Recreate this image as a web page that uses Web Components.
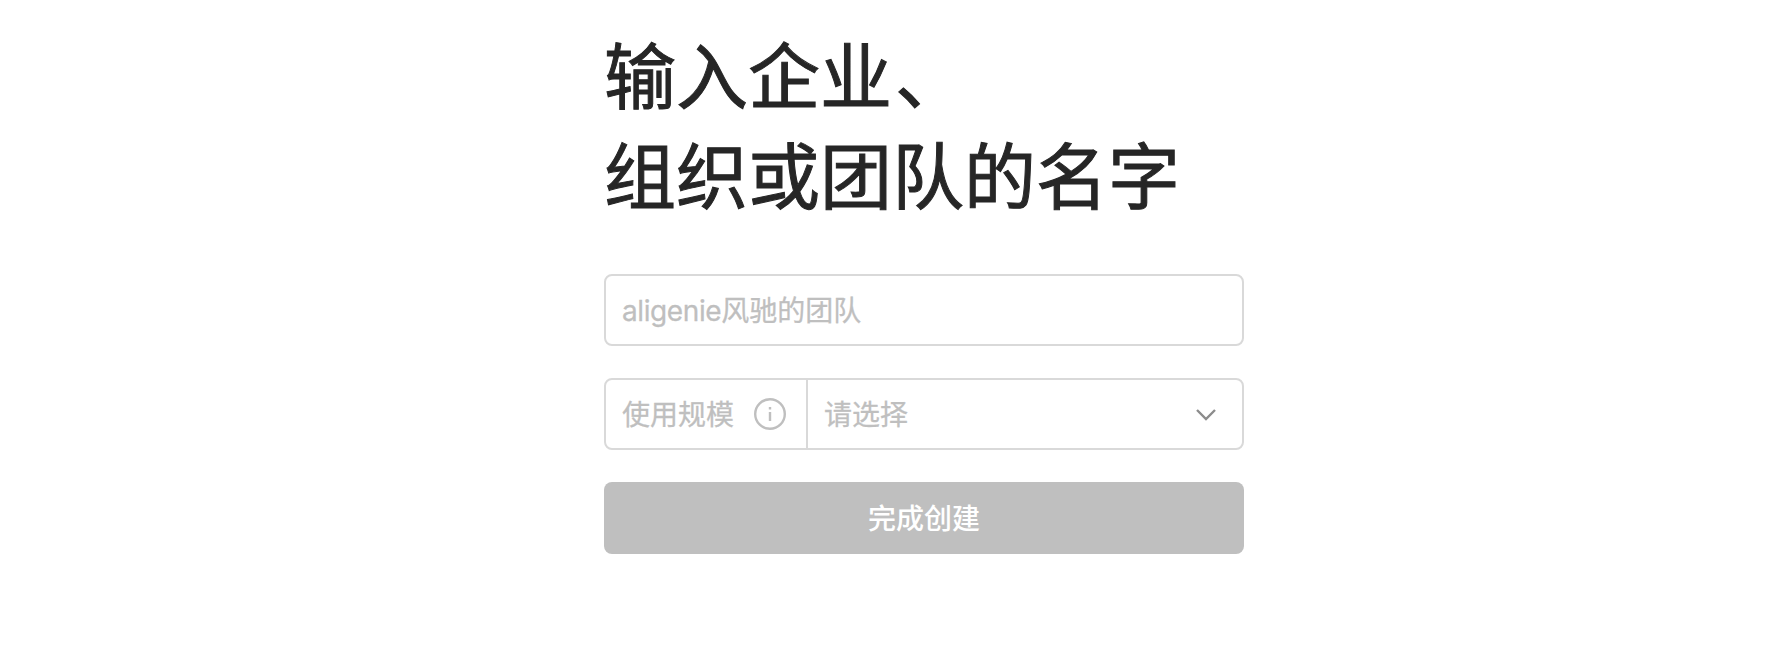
<!DOCTYPE html>
<html lang="zh-CN">
<head>
<meta charset="utf-8">
<title>创建团队</title>
<style>
  html, body { margin: 0; background: #fff; }
  body { font-family: Inter, "Noto Sans CJK SC", sans-serif; overflow: hidden; }
</style>
</head>
<body>
<team-form>
  <form-title>输入企业<span style="margin-left:3px">、</span><br>组织或团队的名字</form-title>
  <text-field placeholder="aligenie风驰的团队"></text-field>
  <select-field label="使用规模" placeholder="请选择"></select-field>
  <submit-button>完成创建</submit-button>
</team-form>
<script>
class TeamForm extends HTMLElement {
  constructor() {
    super();
    this.attachShadow({ mode: 'open' });
    this.shadowRoot.innerHTML = `
      <style>
        :host {
          display: flex;
          flex-direction: column;
          width: 640px;
          margin-left: 604px;
          padding-top: 27px;
        }
      </style>
      <slot></slot>`;
  }
}

class FormTitle extends HTMLElement {
  constructor() {
    super();
    this.attachShadow({ mode: 'open' });
    this.shadowRoot.innerHTML = `
      <style>
        :host {
          display: block;
          margin: 0 0 47px;
          font-size: 72px;
          line-height: 100px;
          font-weight: 400;
          -webkit-text-stroke: 1px #262626;
          color: #262626;
          white-space: nowrap;
        }
      </style>
      <slot></slot>`;
  }
}

class TextField extends HTMLElement {
  constructor() {
    super();
    this.attachShadow({ mode: 'open' });
    const placeholder = this.getAttribute('placeholder') || '';
    this.shadowRoot.innerHTML = `
      <style>
        :host {
          display: flex;
          align-items: center;
          box-sizing: border-box;
          height: 72px;
          padding: 0 16px 3px;
          margin-bottom: 32px;
          border: 2px solid #d9d9d9;
          border-radius: 8px;
          font-size: 28px;
          color: #bfbfbf;
          -webkit-text-stroke: 0.3px #bfbfbf;
        }
        .latin { letter-spacing: -0.4px; }
      </style>
      <span>${placeholder.replace(/[a-z]+/i, '<span class="latin">$&</span>')}</span>`;
  }
}

class SelectField extends HTMLElement {
  constructor() {
    super();
    this.attachShadow({ mode: 'open' });
    const label = this.getAttribute('label') || '';
    const placeholder = this.getAttribute('placeholder') || '';
    this.shadowRoot.innerHTML = `
      <style>
        :host {
          display: flex;
          box-sizing: border-box;
          height: 72px;
          margin-bottom: 32px;
          border: 2px solid #d9d9d9;
          border-radius: 8px;
          font-size: 28px;
          color: #bfbfbf;
          -webkit-text-stroke: 0.3px #bfbfbf;
        }
        .label {
          display: flex;
          align-items: center;
          gap: 20px;
          box-sizing: border-box;
          width: 202px;
          padding: 0 20px 0 16px;
          border-right: 2px solid #d9d9d9;
        }
        .value {
          flex: 1;
          display: flex;
          align-items: center;
          justify-content: space-between;
          padding: 0 25px 0 16px;
        }
        span { padding-bottom: 2px; }
        svg { display: block; flex: none; }
      </style>
      <div class="label">
        <span>${label}</span>
        <svg width="32" height="32" viewBox="0 0 32 32" fill="none" stroke="#bfbfbf">
          <circle cx="16" cy="16" r="14.800" stroke-width="2.400"/>
          <path d="M16 14v9M16 9v2.400" stroke-width="2.400"/>
        </svg>
      </div>
      <div class="value">
        <span>${placeholder}</span>
        <svg width="22" height="14" viewBox="0 0 22 14" fill="none" stroke="#8c8c8c" stroke-width="2.400">
          <path d="M2 3l9 9 9-9"/>
        </svg>
      </div>`;
  }
}

class SubmitButton extends HTMLElement {
  constructor() {
    super();
    this.attachShadow({ mode: 'open' });
    this.shadowRoot.innerHTML = `
      <style>
        :host {
          display: flex;
          align-items: center;
          justify-content: center;
          box-sizing: border-box;
          height: 72px;
          padding-bottom: 2px;
          border-radius: 8px;
          background: #bfbfbf;
          color: #fff;
          font-size: 28px;
          font-weight: 500;
        }
      </style>
      <slot></slot>`;
  }
}

customElements.define('team-form', TeamForm);
customElements.define('form-title', FormTitle);
customElements.define('text-field', TextField);
customElements.define('select-field', SelectField);
customElements.define('submit-button', SubmitButton);
</script>
</body>
</html>
